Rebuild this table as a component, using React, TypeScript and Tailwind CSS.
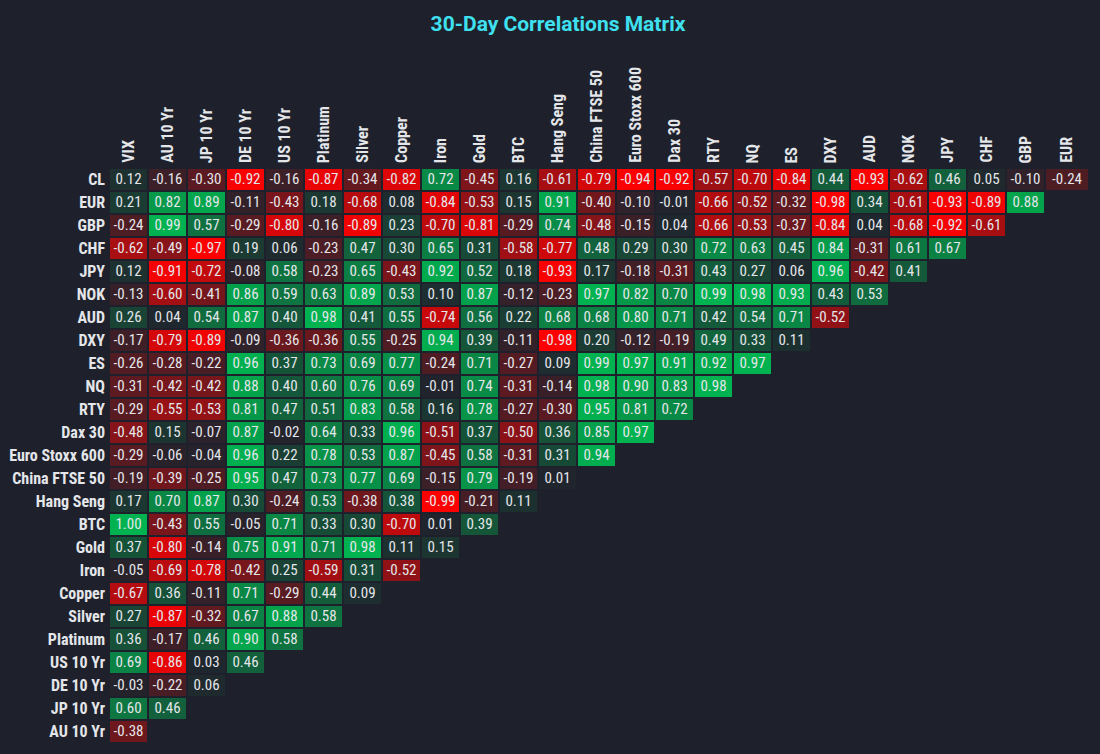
const cols = [
  'VIX', 'AU 10 Yr', 'JP 10 Yr', 'DE 10 Yr', 'US 10 Yr', 'Platinum', 'Silver', 'Copper', 'Iron', 'Gold',
  'BTC', 'Hang Seng', 'China FTSE 50', 'Euro Stoxx 600', 'Dax 30', 'RTY', 'NQ', 'ES', 'DXY', 'AUD',
  'NOK', 'JPY', 'CHF', 'GBP', 'EUR',
];

const rows: [string, number[]][] = [
  ['CL', [0.12, -0.16, -0.3, -0.92, -0.16, -0.87, -0.34, -0.82, 0.72, -0.45, 0.16, -0.61, -0.79, -0.94, -0.92, -0.57, -0.7, -0.84, 0.44, -0.93, -0.62, 0.46, 0.05, -0.1, -0.24]],
  ['EUR', [0.21, 0.82, 0.89, -0.11, -0.43, 0.18, -0.68, 0.08, -0.84, -0.53, 0.15, 0.91, -0.4, -0.1, -0.01, -0.66, -0.52, -0.32, -0.98, 0.34, -0.61, -0.93, -0.89, 0.88]],
  ['GBP', [-0.24, 0.99, 0.57, -0.29, -0.8, -0.16, -0.89, 0.23, -0.7, -0.81, -0.29, 0.74, -0.48, -0.15, 0.04, -0.66, -0.53, -0.37, -0.84, 0.04, -0.68, -0.92, -0.61]],
  ['CHF', [-0.62, -0.49, -0.97, 0.19, 0.06, -0.23, 0.47, 0.3, 0.65, 0.31, -0.58, -0.77, 0.48, 0.29, 0.3, 0.72, 0.63, 0.45, 0.84, -0.31, 0.61, 0.67]],
  ['JPY', [0.12, -0.91, -0.72, -0.08, 0.58, -0.23, 0.65, -0.43, 0.92, 0.52, 0.18, -0.93, 0.17, -0.18, -0.31, 0.43, 0.27, 0.06, 0.96, -0.42, 0.41]],
  ['NOK', [-0.13, -0.6, -0.41, 0.86, 0.59, 0.63, 0.89, 0.53, 0.1, 0.87, -0.12, -0.23, 0.97, 0.82, 0.7, 0.99, 0.98, 0.93, 0.43, 0.53]],
  ['AUD', [0.26, 0.04, 0.54, 0.87, 0.4, 0.98, 0.41, 0.55, -0.74, 0.56, 0.22, 0.68, 0.68, 0.8, 0.71, 0.42, 0.54, 0.71, -0.52]],
  ['DXY', [-0.17, -0.79, -0.89, -0.09, -0.36, -0.36, 0.55, -0.25, 0.94, 0.39, -0.11, -0.98, 0.2, -0.12, -0.19, 0.49, 0.33, 0.11]],
  ['ES', [-0.26, -0.28, -0.22, 0.96, 0.37, 0.73, 0.69, 0.77, -0.24, 0.71, -0.27, 0.09, 0.99, 0.97, 0.91, 0.92, 0.97]],
  ['NQ', [-0.31, -0.42, -0.42, 0.88, 0.4, 0.6, 0.76, 0.69, -0.01, 0.74, -0.31, -0.14, 0.98, 0.9, 0.83, 0.98]],
  ['RTY', [-0.29, -0.55, -0.53, 0.81, 0.47, 0.51, 0.83, 0.58, 0.16, 0.78, -0.27, -0.3, 0.95, 0.81, 0.72]],
  ['Dax 30', [-0.48, 0.15, -0.07, 0.87, -0.02, 0.64, 0.33, 0.96, -0.51, 0.37, -0.5, 0.36, 0.85, 0.97]],
  ['Euro Stoxx 600', [-0.29, -0.06, -0.04, 0.96, 0.22, 0.78, 0.53, 0.87, -0.45, 0.58, -0.31, 0.31, 0.94]],
  ['China FTSE 50', [-0.19, -0.39, -0.25, 0.95, 0.47, 0.73, 0.77, 0.69, -0.15, 0.79, -0.19, 0.01]],
  ['Hang Seng', [0.17, 0.7, 0.87, 0.3, -0.24, 0.53, -0.38, 0.38, -0.99, -0.21, 0.11]],
  ['BTC', [1.0, -0.43, 0.55, -0.05, 0.71, 0.33, 0.3, -0.7, 0.01, 0.39]],
  ['Gold', [0.37, -0.8, -0.14, 0.75, 0.91, 0.71, 0.98, 0.11, 0.15]],
  ['Iron', [-0.05, -0.69, -0.78, -0.42, 0.25, -0.59, 0.31, -0.52]],
  ['Copper', [-0.67, 0.36, -0.11, 0.71, -0.29, 0.44, 0.09]],
  ['Silver', [0.27, -0.87, -0.32, 0.67, 0.88, 0.58]],
  ['Platinum', [0.36, -0.17, 0.46, 0.9, 0.58]],
  ['US 10 Yr', [0.69, -0.86, 0.03, 0.46]],
  ['DE 10 Yr', [-0.03, -0.22, 0.06]],
  ['JP 10 Yr', [0.6, 0.46]],
  ['AU 10 Yr', [-0.38]],
];

// diverging scale: red (-1) -> dark slate (0) -> green (+1)
function cellColor(v: number) {
  const base = [32, 36, 45];
  const end = v < 0 ? [255, 0, 0] : [0, 178, 80];
  const t = Math.pow(Math.min(1, Math.abs(v) / (v < 0 ? 0.95 : 0.97)), 1.15);
  const c = base.map((b, i) => Math.round(b + (end[i] - b) * t));
  return `rgb(${c[0]}, ${c[1]}, ${c[2]})`;
}

export default function App() {
  return (
    <div className="h-[754px] w-[1100px] overflow-hidden bg-[#1e212b] font-['Roboto',sans-serif] text-[#e4e6ea]">
      <div className="flex h-[46px] items-center justify-center pl-[16px] pt-[4px]">
        <h1 className="text-[21px] font-bold font-stretch-[90%] text-[#3fe0f0]">30-Day Correlations Matrix</h1>
      </div>

      <div className="flex pl-[110px]">
        {cols.map((c, i) => (
          <div
            key={c}
            className={`flex h-[123px] items-end justify-center pb-[6px] ${i === cols.length - 1 ? 'w-[42px]' : 'mr-[2px] w-[37px]'}`}
          >
            <span className="rotate-180 whitespace-nowrap text-[16px] font-bold font-stretch-semi-condensed leading-none [writing-mode:vertical-rl]">
              {c}
            </span>
          </div>
        ))}
      </div>

      <div className="flex flex-col gap-[2px]">
        {rows.map(([label, vals]) => (
          <div key={label} className="flex h-[21px]">
            <div className="w-[110px] shrink-0 whitespace-nowrap pr-[5px] text-right text-[16px] font-bold font-stretch-semi-condensed leading-[21px]">
              {label}
            </div>
            {vals.map((v, i) => (
              <div
                key={i}
                className={`flex h-[21px] items-center justify-center text-[15px] font-stretch-condensed ${i === 24 ? 'w-[42px]' : 'mr-[2px] w-[37px]'}`}
                style={{ backgroundColor: cellColor(v) }}
              >
                {v.toFixed(2)}
              </div>
            ))}
          </div>
        ))}
      </div>
    </div>
  );
}
